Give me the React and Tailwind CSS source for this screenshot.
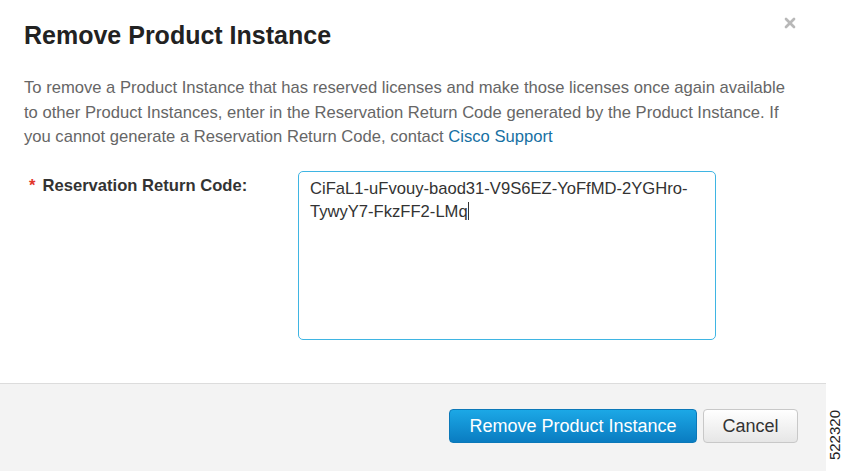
import { X } from 'lucide-react';

const App = () => {
  return (
    <div className="w-[843px] h-[471px] bg-white flex font-['Liberation_Sans',Arial,sans-serif] overflow-hidden">
      <div className="w-[826px] flex flex-col">
        {/* Header + body */}
        <div className="flex-1 relative px-6">
          <button className="absolute right-[28px] top-[15px] text-[#b8b8b8]">
            <X className="w-4 h-4" strokeWidth={4} />
          </button>
          <h2 className="pt-[20px] text-[25px] leading-[30px] font-bold text-[#222]">
            Remove Product Instance
          </h2>
          <p className="mt-[26px] text-[16.6px] leading-[24.5px] text-[#666] w-[770px]">
            To remove a Product Instance that has reserved licenses and make those licenses once again available to other Product Instances, enter in the Reservation Return Code generated by the Product Instance. If you cannot generate a Reservation Return Code, contact{' '}
            <a className="text-[#1670a3]">Cisco Support</a>
          </p>
          <div className="mt-[21px] flex items-start">
            <label className="w-[274px] pl-[5px] pt-[3px] text-[16.6px] font-bold text-[#333] flex gap-[7px]">
              <span className="text-[#e2352b]">*</span>
              <span>Reservation Return Code:</span>
            </label>
            <div className="w-[418px] h-[169px] border border-[#3fb5e3] rounded-[5px] px-[11px] pt-[5px] text-[16.6px] leading-[23px] text-[#333]">
              CiFaL1-uFvouy-baod31-V9S6EZ-YoFfMD-2YGHro-
              <br />
              TywyY7-FkzFF2-LMq<span className="inline-block w-px h-[18px] bg-[#333] align-[-3px]" />
            </div>
          </div>
        </div>
        {/* Footer */}
        <div className="h-[88px] border-t border-[#dcdcdc] bg-[#f3f3f3] flex items-start justify-end gap-[6px] pt-[25px] pr-[28px]">
          <button className="w-[248px] h-[34px] rounded-[4px] bg-gradient-to-b from-[#1ca8e6] to-[#0a7cc1] text-white text-[18px] border border-[#0b78b8]">
            Remove Product Instance
          </button>
          <button className="w-[95px] h-[34px] rounded-[4px] bg-gradient-to-b from-white to-[#e6e6e6] border border-[#c8c8c8] text-[#333] text-[18px]">
            Cancel
          </button>
        </div>
      </div>
      <div className="flex-1 flex items-end justify-center pb-[11px]">
        <span className="[writing-mode:vertical-rl] rotate-180 text-[15px] text-[#222] leading-none">522320</span>
      </div>
    </div>
  );
};

export default App;
